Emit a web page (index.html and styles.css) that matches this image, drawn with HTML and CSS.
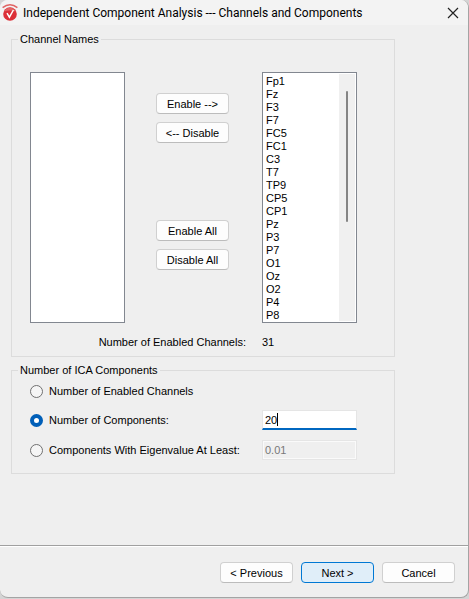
FILE: index.html
```html
<!DOCTYPE html>
<html lang="en">
<head>
<meta charset="utf-8">
<title>Independent Component Analysis</title>
<link rel="stylesheet" href="styles.css">
</head>
<body>
<form class="window">
  <header class="titlebar">
    <svg class="logo" viewBox="0 0 16 17" aria-hidden="true">
      <path d="M.6 3.6Q8-2 15.4 3.6" fill="none" stroke="#e06464" stroke-width="1.5"/>
      <circle cx="8" cy="10" r="6.8" fill="#dc3038"/>
      <path d="M2.2 7.6a6.3 6.3 0 0 1 11.6 0Q8 5.6 2.2 7.6z" fill="#e36464"/>
      <path d="M5 9.2l2.4 4L11.4 6" fill="none" stroke="#fff" stroke-width="1.5"/>
    </svg>
    <h1 class="title">Independent Component Analysis --- Channels and Components</h1>
    <button class="close" type="button" aria-label="Close">
      <svg viewBox="0 0 12 12" aria-hidden="true"><path d="M1 1l10 10M11 1L1 11" fill="none" stroke="#222" stroke-width="1.2"/></svg>
    </button>
  </header>
  <main class="content">
    <fieldset class="group channels">
      <legend>Channel Names</legend>
      <select class="list" multiple aria-label="Disabled channels"></select>
      <div class="actions">
        <div class="pair">
          <button class="btn" type="button">Enable --&gt;</button>
          <button class="btn" type="button">&lt;-- Disable</button>
        </div>
        <div class="pair">
          <button class="btn" type="button">Enable All</button>
          <button class="btn" type="button">Disable All</button>
        </div>
      </div>
      <div class="scroller">
        <select class="list" multiple aria-label="Enabled channels">
          <option>Fp1</option><option>Fz</option><option>F3</option><option>F7</option>
          <option>FC5</option><option>FC1</option><option>C3</option><option>T7</option>
          <option>TP9</option><option>CP5</option><option>CP1</option><option>Pz</option>
          <option>P3</option><option>P7</option><option>O1</option><option>Oz</option>
          <option>O2</option><option>P4</option><option>P8</option>
        </select>
        <span class="track"><span class="thumb"></span></span>
      </div>
      <span class="count-label">Number of Enabled Channels:</span>
      <output class="count">31</output>
    </fieldset>
    <fieldset class="group components">
      <legend>Number of ICA Components</legend>
      <label class="choice wide"><input type="radio" name="mode">Number of Enabled Channels</label>
      <label class="choice"><input type="radio" name="mode" checked>Number of Components:</label>
      <div class="entry"><input class="field active" type="text" value="20" aria-label="Number of components"><span class="caret"></span></div>
      <label class="choice"><input type="radio" name="mode">Components With Eigenvalue At Least:</label>
      <div class="entry"><input class="field" type="text" value="0.01" disabled aria-label="Minimum eigenvalue"></div>
    </fieldset>
  </main>
  <footer class="footer">
    <button class="btn" type="button">&lt; Previous</button>
    <button class="btn default" type="button">Next &gt;</button>
    <button class="btn" type="button">Cancel</button>
  </footer>
</form>
</body>
</html>
```
FILE: styles.css
```css
* { box-sizing: border-box; }

body {
  margin: 0;
  background: #d4d4d4;
  color: #000;
  font: 11px/14px "Liberation Sans", Arial, sans-serif;
}

button, input, select { font: inherit; color: inherit; }

.window {
  display: flex;
  flex-direction: column;
  min-height: calc(100vh - 1px);
  overflow: hidden;
  background: #efefef;
  border: solid #a4a4a4;
  border-width: 0 1px 1px 0;
  border-radius: 8px;
}

.titlebar {
  display: flex;
  align-items: center;
  height: 25px;
  padding: 0 9px 0 2px;
  background: #f3f3f3;
}

.logo { flex: none; width: 16px; height: 17px; }

.title {
  flex: 1;
  margin: 0 0 0 5px;
  font: 12px/16px Roboto, "Segoe UI", sans-serif;
  white-space: nowrap;
}

.close {
  display: flex;
  padding: 0;
  border: 0;
  background: none;
}

.close svg { width: 12px; height: 12px; }

.content {
  flex: 1;
  display: flex;
  flex-direction: column;
  gap: 6px;
  padding: 7px 73px 0 11px;
}

.group {
  display: grid;
  min-width: 0;
  margin: 0;
  border: 1px solid #dcdcdc;
}

.group legend {
  height: 15px;
  margin-left: -12px;
  padding: 0 2px;
  line-height: 15px;
}

.channels {
  grid-template-columns: 95px 1fr 95px;
  row-gap: 12px;
  padding: 25px 37px 7px 18px;
}

.components {
  grid-template-columns: 1fr 95px;
  grid-template-rows: 18px 20px 20px;
  row-gap: 10px;
  padding: 4px 37px 13px 18px;
}

.list {
  display: block;
  width: 100%;
  height: 251px;
  padding: 2px 1px;
  border: 1px solid #828790;
  border-radius: 0;
  background: #fff;
  overflow: hidden;
}

.list option {
  min-height: 13px;
  height: 13px;
  padding: 0 2px;
  line-height: 13px;
}

.scroller { position: relative; }

.track {
  position: absolute;
  top: 2px;
  right: 2px;
  bottom: 2px;
  width: 16px;
  padding: 17px 7px 0;
  background: #f0f0f0;
}

.thumb {
  display: block;
  height: 131px;
  border-radius: 1px;
  background: #858585;
}

.actions {
  display: flex;
  flex-direction: column;
  align-items: center;
  justify-content: space-between;
  padding: 21px 2px 53px 0;
}

.pair { display: grid; gap: 8px; }

.btn {
  width: 73px;
  height: 21px;
  padding: 0;
  border: 1px solid #d0d0d0;
  border-bottom-color: #bcbcbc;
  border-radius: 4px;
  background: #fdfdfd;
  white-space: nowrap;
}

.btn.default {
  border-color: #0078d4;
  background: #e0eef9;
}

.count-label {
  grid-column: 1 / 3;
  padding-right: 16px;
  text-align: right;
}

.choice {
  display: flex;
  align-items: center;
  gap: 6px;
  white-space: nowrap;
}

.wide { grid-column: 1 / -1; }

.choice input {
  appearance: none;
  flex: none;
  width: 13px;
  height: 13px;
  margin: 0;
  border: 1px solid #707070;
  border-radius: 50%;
  background: #f5f5f5;
}

.choice input:checked {
  border: 4px solid #005fb8;
  background: #fff;
}

.entry { position: relative; }

.field {
  display: block;
  width: 100%;
  height: 20px;
  padding: 0 2px;
  border: 1px solid #e5e5e5;
  border-radius: 0;
  background: #fff;
}

.field.active { border-bottom: 2px solid #0067c0; }

.field:disabled {
  background: #efefef;
  color: #787878;
  box-shadow: inset 0 0 0 1px #fafafa;
}

.caret {
  position: absolute;
  top: 3px;
  left: 15px;
  width: 1px;
  height: 13px;
  background: #000;
}

.footer {
  display: flex;
  justify-content: flex-end;
  gap: 8px;
  padding: 16px 13px 14px;
  border-top: 1px solid #a0a0a0;
  box-shadow: inset 0 1px #fff;
}
```
